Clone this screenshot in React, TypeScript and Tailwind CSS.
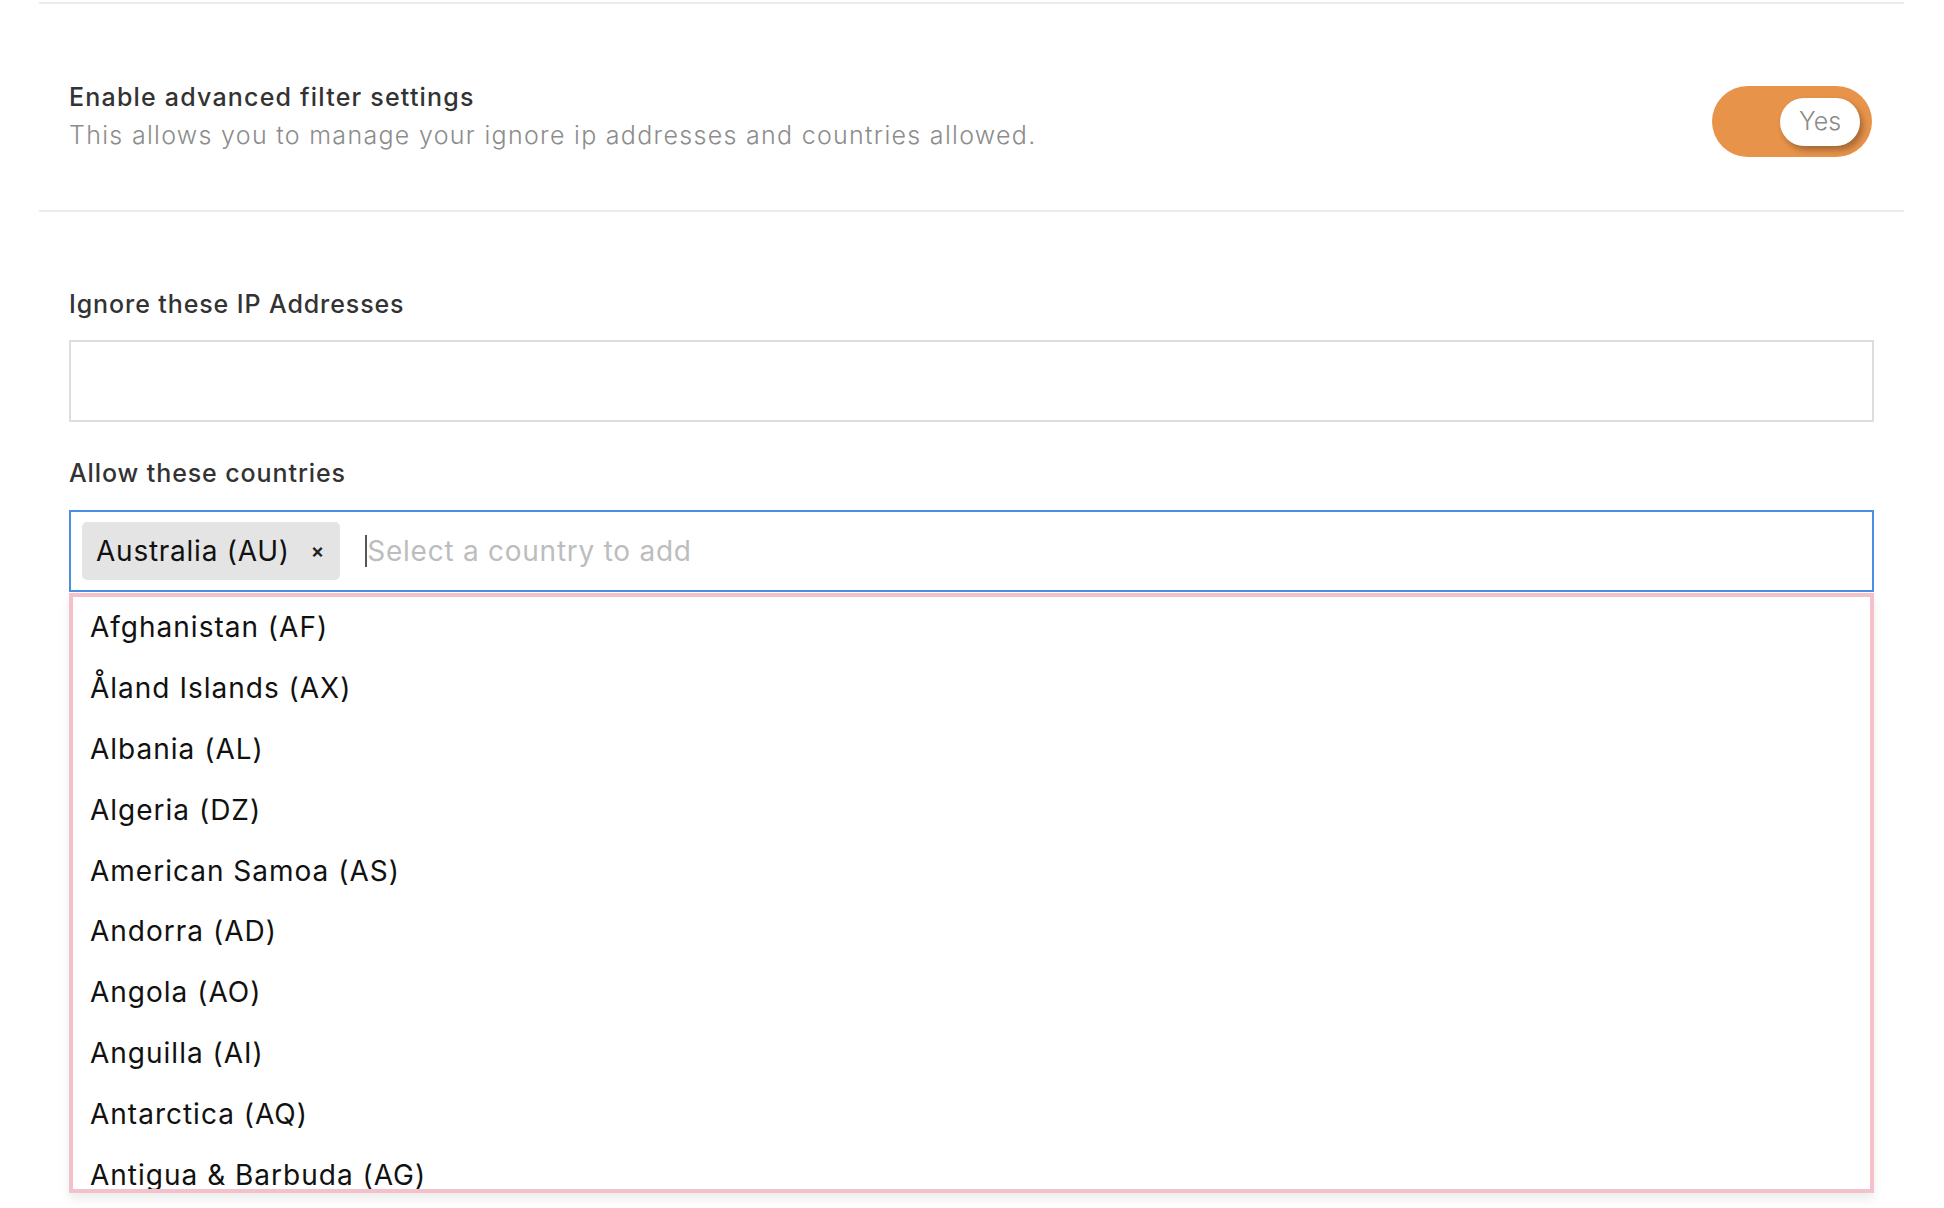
import React from "react";

const COUNTRIES = [
  "Afghanistan (AF)",
  "Åland Islands (AX)",
  "Albania (AL)",
  "Algeria (DZ)",
  "American Samoa (AS)",
  "Andorra (AD)",
  "Angola (AO)",
  "Anguilla (AI)",
  "Antarctica (AQ)",
  "Antigua & Barbuda (AG)",
];

export default function App() {
  return (
    <div className="min-h-[1208px] w-full bg-white font-['Inter',sans-serif]">
      <div className="mx-[39px] w-[1865px] pt-[2px]">
        <div className="h-[2px] bg-[#ebebeb]" />
        <div className="flex h-[206px] items-start justify-between px-[30px] pt-[78px]">
          <div>
            <div className="text-[25px] font-medium leading-[30px] tracking-[1.2px] text-[#333333]">
              Enable advanced filter settings
            </div>
            <div className="mt-[8px] text-[25px] font-light leading-[30px] tracking-[1.3px] text-[#8c8c8c]">
              This allows you to manage your ignore ip addresses and countries allowed.
            </div>
          </div>
          <div className="mr-[2px] mt-[4px] flex h-[71px] w-[160px] items-center justify-end rounded-full bg-[#e8934a] pr-[12px]">
            <div className="flex h-[48px] w-[80px] items-center justify-center rounded-full bg-white text-[25px] font-light text-[#8a8a8a] shadow-[3px_4px_6px_rgba(0,0,0,0.3)]">
              Yes
            </div>
          </div>
        </div>
        <div className="h-[2px] bg-[#ebebeb]" />
        <div className="px-[30px] pt-[77px]">
          <div className="text-[25px] font-medium leading-[30px] tracking-[0.9px] text-[#333333]">
            Ignore these IP Addresses
          </div>
          <div className="mt-[21px] h-[82px] border-2 border-[#dddddd] bg-white" />
          <div className="mt-[36px] text-[25px] font-medium leading-[30px] tracking-[0.9px] text-[#333333]">
            Allow these countries
          </div>
          <div className="mt-[22px] flex h-[82px] items-center border-2 border-[#4a90e2] bg-white pl-[11px]">
            <div className="flex h-[58px] items-center rounded-[5px] bg-[#e4e4e4] pl-[14px] pr-[16px]">
              <span className="text-[28px] leading-none tracking-[0.75px] text-[#111111]">Australia (AU)</span>
              <span className="ml-[21px] text-[20px] font-semibold leading-none text-[#222222]">×</span>
            </div>
            <div className="ml-[25px] flex items-center">
              <span className="h-[32px] w-[2px] bg-[#555555]" />
              <span className="text-[28px] leading-none tracking-[0.75px] text-[#bdbdbd]">
                Select a country to add
              </span>
            </div>
          </div>
          <div className="mt-[1px] h-[600px] overflow-hidden border-4 border-[#f4c1cb] bg-white shadow-[0_6px_10px_rgba(0,0,0,0.08)]">
            {COUNTRIES.map((c) => (
              <div
                key={c}
                className="flex h-[60.8px] shrink-0 items-center pl-[17px] text-[28px] tracking-[1px] text-[#111111]"
              >
                {c}
              </div>
            ))}
          </div>
        </div>
      </div>
    </div>
  );
}
